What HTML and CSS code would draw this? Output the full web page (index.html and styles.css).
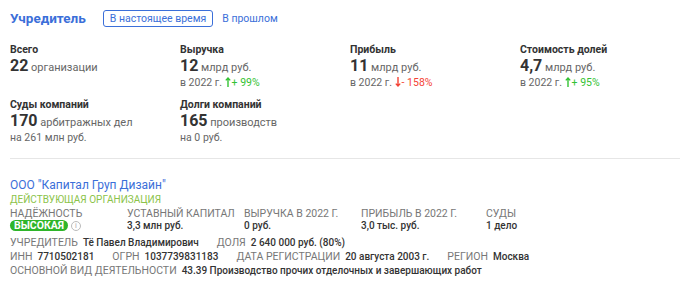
FILE: index.html
```html
<!DOCTYPE html>
<html lang="ru">
<head>
  <meta charset="UTF-8">
  <title>Учредитель</title>
  <link rel="stylesheet" href="styles.css">
</head>
<body>
  <div class="head">
    <h2 class="title">Учредитель</h2>
    <a class="tab active">В настоящее время</a>
    <a class="tab">В прошлом</a>
  </div>

  <div class="stats">
    <div class="stat">
      <div class="stat-label">Всего</div>
      <div class="stat-value"><b>22</b> организации</div>
    </div>
    <div class="stat">
      <div class="stat-label">Выручка</div>
      <div class="stat-value"><b>12</b> млрд руб.</div>
      <div class="stat-sub">в 2022 г. <span class="up"><svg class="arrow" viewBox="0 0 6 10"><path d="M3 10V1M0.8 3.4L3 1l2.2 2.4"/></svg>+ 99%</span></div>
    </div>
    <div class="stat">
      <div class="stat-label">Прибыль</div>
      <div class="stat-value"><b>11</b> млрд руб.</div>
      <div class="stat-sub">в 2022 г. <span class="down"><svg class="arrow" viewBox="0 0 6 10"><path d="M3 0v9M0.8 6.6L3 9l2.2-2.4"/></svg>- 158%</span></div>
    </div>
    <div class="stat">
      <div class="stat-label">Стоимость долей</div>
      <div class="stat-value"><b>4,7</b> млрд руб.</div>
      <div class="stat-sub">в 2022 г. <span class="up"><svg class="arrow" viewBox="0 0 6 10"><path d="M3 10V1M0.8 3.4L3 1l2.2 2.4"/></svg>+ 95%</span></div>
    </div>
    <div class="stat">
      <div class="stat-label">Суды компаний</div>
      <div class="stat-value"><b>170</b> арбитражных дел</div>
      <div class="stat-sub">на 261 млн руб.</div>
    </div>
    <div class="stat">
      <div class="stat-label">Долги компаний</div>
      <div class="stat-value"><b>165</b> производств</div>
      <div class="stat-sub">на 0 руб.</div>
    </div>
  </div>

  <div class="company">
    <a class="company-name">ООО "Капитал Груп Дизайн"</a>
    <div class="company-status">Действующая организация</div>

    <div class="facts">
      <div class="fact">
        <div class="fact-label">Надёжность</div>
        <div class="fact-value"><span class="badge">Высокая</span><span class="info">i</span></div>
      </div>
      <div class="fact">
        <div class="fact-label">Уставный капитал</div>
        <div class="fact-value">3,3 млн руб.</div>
      </div>
      <div class="fact">
        <div class="fact-label">Выручка в 2022 г.</div>
        <div class="fact-value">0 руб.</div>
      </div>
      <div class="fact">
        <div class="fact-label">Прибыль в 2022 г.</div>
        <div class="fact-value">3,0 тыс. руб.</div>
      </div>
      <div class="fact">
        <div class="fact-label">Суды</div>
        <div class="fact-value">1 дело</div>
      </div>
    </div>

    <div class="line">
      <span class="pair"><span class="key">Учредитель</span>Тё Павел Владимирович</span>
      <span class="pair"><span class="key">Доля</span>2 640 000 руб. (80%)</span>
    </div>
    <div class="line">
      <span class="pair"><span class="key">ИНН</span>7710502181</span>
      <span class="pair"><span class="key">ОГРН</span>1037739831183</span>
      <span class="pair"><span class="key">Дата регистрации</span>20 августа 2003 г.</span>
      <span class="pair"><span class="key">Регион</span>Москва</span>
    </div>
    <div class="line">
      <span class="pair"><span class="key">Основной вид деятельности</span>43.39 Производство прочих отделочных и завершающих работ</span>
    </div>
  </div>
</body>
</html>
```

FILE: styles.css
```css
body {
  font-family: 'Roboto', 'Liberation Sans', sans-serif;
  color: #333;
  background: #fff;
  margin: 0;
  padding: 9px 10px 0;
}

.head {
  display: flex;
  align-items: center;
  height: 18px;
}

.title {
  margin: 0 17px 0 0;
  font-size: 13.5px;
  font-weight: 700;
  color: #3b6fd9;
}

.tab {
  font-size: 10.5px;
  color: #3b6fd9;
  padding: 1px 6px;
  border: 1px solid transparent;
  border-radius: 3px;
  margin-right: 2px;
}

.tab.active {
  border-color: #3b6fd9;
}

.stats {
  display: grid;
  grid-template-columns: repeat(4, 170px);
  row-gap: 9px;
  margin-top: 16px;
  padding-bottom: 14px;
  border-bottom: 1px solid #e6e6e6;
  width: 670px;
}

.stat-label {
  font-size: 10.5px;
  font-weight: 700;
  line-height: 14px;
}

.stat-value {
  font-size: 11px;
  color: #666;
  line-height: 18px;
}

.stat-value b {
  font-size: 16px;
  font-weight: 700;
  color: #333;
}

.stat-sub {
  font-size: 10.5px;
  color: #666;
  line-height: 12px;
}

.up {
  color: #34c234;
}

.down {
  color: #f44336;
}

.arrow {
  width: 6px;
  height: 10px;
  margin-right: 1px;
  vertical-align: -1px;
  fill: none;
  stroke: currentColor;
  stroke-width: 1.4;
}

.company {
  padding-top: 19px;
}

.company-name {
  font-size: 12px;
  color: #3b6fd9;
  line-height: 15px;
  display: block;
}

.company-status {
  font-size: 10px;
  color: #8bc34a;
  text-transform: uppercase;
  line-height: 14px;
}

.facts {
  display: flex;
  margin-top: 1px;
}

.fact {
  width: 117px;
}

.fact:nth-child(4) {
  width: 125px;
}

.fact-label {
  font-size: 10.5px;
  color: #777;
  text-transform: uppercase;
  line-height: 12px;
}

.fact-value {
  font-size: 10px;
  font-weight: 500;
  line-height: 12px;
  display: flex;
  align-items: center;
}

.badge {
  background: #2fb52a;
  color: #fff;
  font-size: 10.5px;
  font-weight: 700;
  text-transform: uppercase;
  border-radius: 6px;
  padding: 0 4px;
  line-height: 11px;
}

.info {
  display: inline-block;
  width: 8px;
  height: 8px;
  margin-left: 3px;
  border: 1px solid #bbb;
  border-radius: 50%;
  color: #bbb;
  font-size: 7px;
  line-height: 8px;
  text-align: center;
}

.line {
  display: flex;
  align-items: baseline;
  gap: 18px;
  height: 14px;
  font-size: 10px;
  font-weight: 500;
  line-height: 14px;
}

.facts + .line {
  margin-top: 4px;
}

.key {
  font-size: 10.5px;
  color: #777;
  font-weight: 400;
  text-transform: uppercase;
  margin-right: 5px;
}
```
